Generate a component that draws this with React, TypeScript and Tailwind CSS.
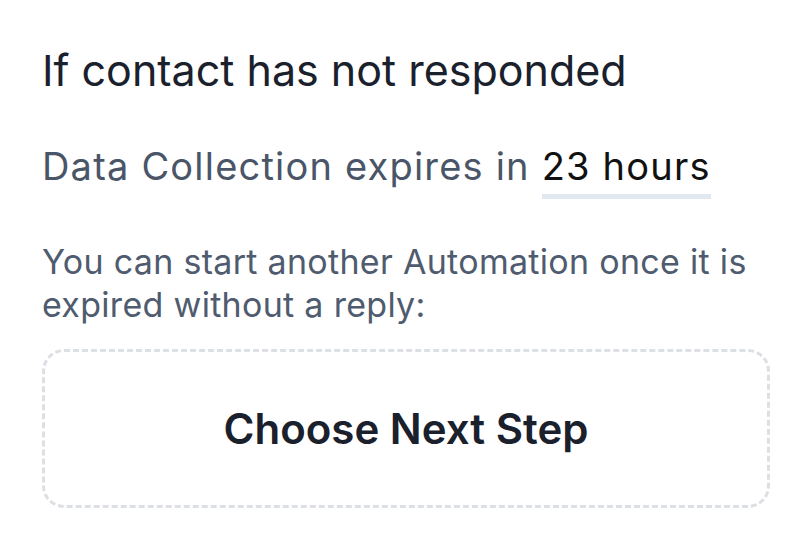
const App = () => {
  return (
    <div className="w-[800px] h-[553px] bg-white pl-[42px] pr-[30px] pt-[44px] font-['Inter',sans-serif]">
      <h1 className="text-[43px] leading-[52px] font-normal text-[#1a202c]">
        If contact has not responded
      </h1>

      <p className="mt-[46px] text-[38px] leading-[48px] text-[#4a5568] tracking-[1.2px] whitespace-nowrap">
        Data Collection expires in{" "}
        <span className="text-[#111] border-b-[5px] border-[#e2e8f0] pb-[5px]">23 hours</span>
      </p>

      <p className="mt-[50px] text-[34px] leading-[43px] text-[#4f5b6e] tracking-[0.3px]">
        You can start another Automation once it is expired without a reply:
      </p>

      <button className="mt-[23px] w-full h-[159px] border-[3px] border-dashed border-[#dcdfe4] rounded-[22px] flex items-center justify-center">
        <span className="text-[42px] font-semibold text-[#1a202c]">Choose Next Step</span>
      </button>
    </div>
  );
};

export default App;
